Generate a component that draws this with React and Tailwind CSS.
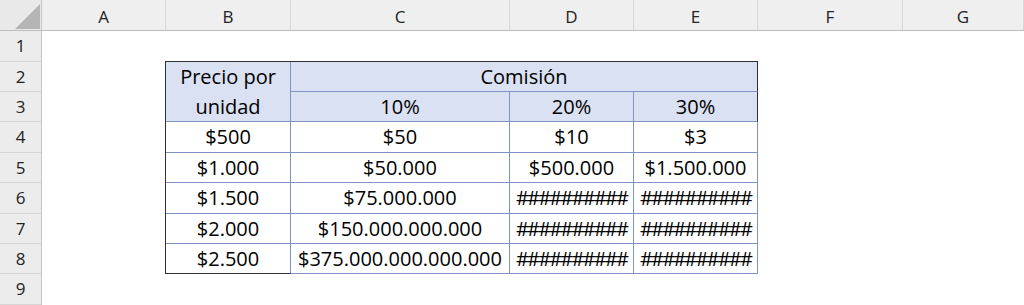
import React from "react";

const font = { fontFamily: '"Open Sans", "Noto Sans", sans-serif' };

const columns = [
  { name: "A", w: "w-[124px]" },
  { name: "B", w: "w-[125px]" },
  { name: "C", w: "w-[219px]" },
  { name: "D", w: "w-[124px]" },
  { name: "E", w: "w-[124px]" },
  { name: "F", w: "w-[145px]" },
  { name: "G", w: "flex-1" },
];

const rowHeights = ["h-[31px]", "h-[30px]", "h-[30px]", "h-[31px]", "h-[30px]", "h-[31px]", "h-[30px]", "h-[30px]", "h-[31px]"];

const HASH = "##########";

// price rows: precio, 10%, 20%, 30%
const data = [
  ["$500", "$50", "$10", "$3"],
  ["$1.000", "$50.000", "$500.000", "$1.500.000"],
  ["$1.500", "$75.000.000", HASH, HASH],
  ["$2.000", "$150.000.000.000", HASH, HASH],
  ["$2.500", "$375.000.000.000.000", HASH, HASH],
];

const dataHeights = ["h-[31px]", "h-[30px]", "h-[31px]", "h-[30px]", "h-[30px]"];

const Cell = ({ children, className = "" }) => {
  const isHash = children === HASH;
  return (
    <div
      className={`flex items-center justify-center whitespace-nowrap overflow-hidden text-[20px] leading-[30px] text-black ${
        isHash ? "tracking-[-1.8px] font-medium" : ""
      } ${className}`}
    >
      {children}
    </div>
  );
};

const App = () => {
  return (
    <div className="w-[1024px] h-[305px] bg-white overflow-hidden" style={font}>
      {/* column headers */}
      <div className="flex h-[31px] bg-[#efefef] border-b border-[#bcbcbc]">
        <div className="relative w-[42px] border-r border-[#c4c4c4] bg-[#e9e9e9]">
          <svg className="absolute right-[1px] bottom-[1px]" width="25" height="25" viewBox="0 0 25 25">
            <polygon points="25,0 25,25 0,25" fill="#b5b5b5" />
          </svg>
        </div>
        {columns.map((c) => (
          <div
            key={c.name}
            className={`${c.w} border-r border-[#d8d8d8] text-center text-[17px] leading-[26px] pt-[4px] text-[#222]`}
          >
            {c.name}
          </div>
        ))}
      </div>

      <div className="flex">
        {/* row headers */}
        <div className="w-[42px] flex flex-col bg-[#ececec] border-r border-[#c4c4c4]">
          {rowHeights.map((h, i) => (
            <div
              key={i}
              className={`${h} border-b border-[#d6d6d6] text-center text-[17px] leading-[30px] text-[#222]`}
            >
              {i + 1}
            </div>
          ))}
        </div>

        {/* sheet body */}
        <div className="flex-1 pt-[30px] pl-[123px]">
          <div className="w-[593px] border-t border-l border-[#303030]">
            <div className="grid grid-cols-[125px_219px_124px_124px] grid-rows-[30px_30px]">
              <div className="row-span-2 bg-[#d9e1f2] border-r border-b border-[#8192c4] flex flex-col items-center text-[20px] leading-[30px] text-black">
                <span>Precio por</span>
                <span>unidad</span>
              </div>
              <Cell className="col-span-3 bg-[#d9e1f2] border-b border-b-[#8192c4] border-r border-r-[#303030]">
                Comisión
              </Cell>
              <Cell className="bg-[#d9e1f2] border-r border-b border-[#8192c4]">10%</Cell>
              <Cell className="bg-[#d9e1f2] border-r border-b border-[#8192c4]">20%</Cell>
              <Cell className="bg-[#d9e1f2] border-b border-b-[#8192c4] border-r border-r-[#303030]">
                30%
              </Cell>
            </div>
            {data.map((row, i) => (
              <div key={i} className={`flex ${dataHeights[i]}`}>
                <Cell
                  className={`w-[125px] border-r border-r-[#8192c4] border-b ${
                    i === data.length - 1 ? "border-b-[#303030]" : "border-b-[#8192c4]"
                  }`}
                >
                  {row[0]}
                </Cell>
                <Cell className="w-[219px] border-r border-b border-[#8192c4]">{row[1]}</Cell>
                <Cell className="w-[124px] border-r border-b border-[#8192c4]">{row[2]}</Cell>
                <Cell className="w-[124px] border-r border-b border-[#8192c4]">{row[3]}</Cell>
              </div>
            ))}
          </div>
        </div>
      </div>
    </div>
  );
};

export default App;
